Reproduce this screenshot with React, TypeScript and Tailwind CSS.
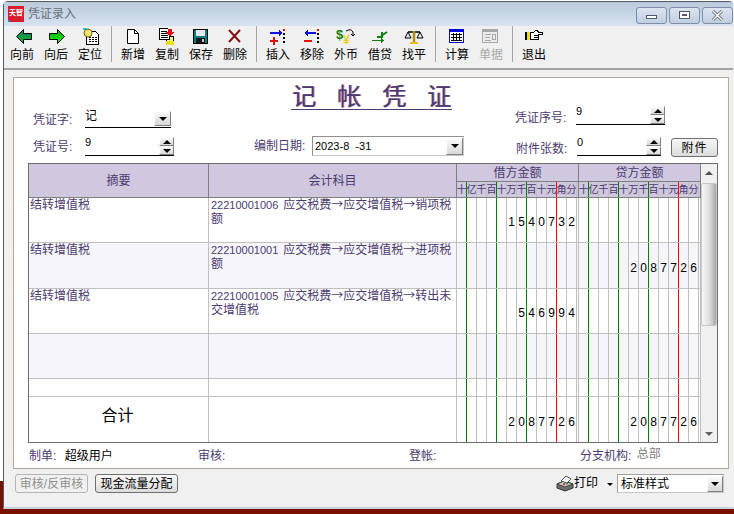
import type { ReactNode } from 'react';

const purple = 'text-[#4b3b70]';

function Arrow({ dir }: { dir: 'left' | 'right' }) {
  const id = `arrow-${dir}`;
  return (
    <svg width="20" height="18" viewBox="0 0 20 18">
      <defs>
        <linearGradient id={id} x1="0" y1="0" x2="0" y2="1">
          <stop offset="0" stopColor={dir === 'left' ? '#0d6f6f' : '#00a000'} />
          <stop offset="1" stopColor={dir === 'left' ? '#16c020' : '#20ff20'} />
        </linearGradient>
      </defs>
      {dir === 'left' ? (
        <polygon points="4.5,8.5 11.5,1.5 11.5,5.5 19.5,5.5 19.5,11.5 11.5,11.5 11.5,15.5" fill={`url(#${id})`} stroke="#000" />
      ) : (
        <polygon points="18.5,8.5 11.5,1.5 11.5,5.5 3.5,5.5 3.5,11.5 11.5,11.5 11.5,15.5" fill={`url(#${id})`} stroke="#000" />
      )}
    </svg>
  );
}

function LocateIcon() {
  return (
    <svg width="20" height="18" viewBox="0 0 20 18" shapeRendering="crispEdges">
      <path d="M6.5 3.5h9l3 3v10h-12z" fill="#fff" stroke="#000" />
      <path d="M9 9h2M12 9h2M15 9h2M9 11h2M12 11h2M15 11h2M9 13h2M12 13h2M15 13h2" stroke="#000" />
      <rect x="3" y="0" width="4" height="2" fill="#22c8e8" />
      <circle cx="8" cy="5" r="4" fill="#f2dc4a" stroke="#6b6b20" shapeRendering="auto" />
      <path d="M6 3l4 4M9 2l2 3" stroke="#fff8b0" />
    </svg>
  );
}

function NewIcon() {
  return (
    <svg width="20" height="18" viewBox="0 0 20 18">
      <path d="M4.5 1.5h7l4 4v10h-11z" fill="#fff" stroke="#000" />
      <path d="M11.5 1.5v4h4" fill="none" stroke="#000" />
    </svg>
  );
}

function CopyIcon() {
  return (
    <svg width="20" height="18" viewBox="0 0 20 18" shapeRendering="crispEdges">
      <path d="M9.5 8.5h7v8h-7z" fill="#f4f080" stroke="#000" />
      <rect x="9" y="13" width="8" height="4" fill="#e8e020" />
      <path d="M2.5 0.5h8l2 2v9h-10z" fill="#fff" stroke="#000" />
      <path d="M4 3h6M4 5h7M4 7h7M4 9h7" stroke="#000" />
      <path d="M11 1h4v3h2l-4 5-4-5h2z" fill="#e01010" />
    </svg>
  );
}

function SaveIcon() {
  return (
    <svg width="20" height="18" viewBox="0 0 20 18" shapeRendering="crispEdges">
      <path d="M2.5 1.5h14v14h-14z" fill="#0a7c80" stroke="#000" />
      <rect x="5" y="2" width="9" height="6" fill="#e8e8e8" />
      <rect x="5" y="10" width="9" height="5" fill="#10181c" />
      <rect x="11" y="11" width="2" height="3" fill="#bfc8c8" />
    </svg>
  );
}

function DeleteIcon() {
  return (
    <svg width="20" height="18" viewBox="0 0 20 18">
      <path d="M4 2l11 12M15 2L4 14" stroke="#8a1010" strokeWidth="2" fill="none" />
    </svg>
  );
}

function InsertIcon() {
  return (
    <svg width="20" height="18" viewBox="0 0 20 18" shapeRendering="crispEdges">
      <path d="M2 4h9V2l3 3-3 3V6H2z" fill="#1010e0" />
      <path d="M5 9h2v3h3v2H7v3H5v-3H2v-2h3z" fill="#e01010" />
      <rect x="15" y="1" width="2" height="2" fill="#e01010" />
      <path d="M15 5h2v2h-2zM15 9h2v2h-2zM15 13h2v2h-2z" fill="#000" />
    </svg>
  );
}

function RemoveIcon() {
  return (
    <svg width="20" height="18" viewBox="0 0 20 18" shapeRendering="crispEdges">
      <path d="M14 4H6V2L2 5l4 3V6h8z" fill="#1010e0" />
      <rect x="2" y="12" width="8" height="2" fill="#e01010" />
      <rect x="15" y="1" width="2" height="2" fill="#e01010" />
      <path d="M15 5h2v2h-2zM15 9h2v2h-2zM15 13h2v2h-2z" fill="#000" />
    </svg>
  );
}

function CurrencyIcon() {
  return (
    <svg width="20" height="18" viewBox="0 0 20 18">
      <text x="0" y="11" fontSize="13" fontWeight="700" fill="#108010" fontFamily="Liberation Sans">$</text>
      <text x="7" y="16" fontSize="12" fontWeight="700" fill="#e8d010" fontFamily="Liberation Sans">¥</text>
      <path d="M10 3q5-3 7 1l0 3" stroke="#000" fill="none" />
      <path d="M15 6l2 2 2-2" stroke="#000" fill="none" />
    </svg>
  );
}

function LoanIcon() {
  return (
    <svg width="20" height="18" viewBox="0 0 20 18" shapeRendering="crispEdges">
      <path d="M11 8l6-4" stroke="#108010" strokeWidth="2" shapeRendering="auto" />
      <path d="M12 4v5h-5" stroke="#108010" strokeWidth="1.5" fill="none" />
      <path d="M2 12h9V10l3 2.5-3 2.5v-2H2z" fill="#108010" />
    </svg>
  );
}

function BalanceIcon() {
  return (
    <svg width="20" height="18" viewBox="0 0 20 18">
      <path d="M4 4h12" stroke="#000" strokeWidth="1.5" />
      <path d="M10 3v11" stroke="#b09010" strokeWidth="2.5" />
      <path d="M6 15h8" stroke="#e0c010" strokeWidth="2" />
      <path d="M4 4L1 10h6zM16 4l-3 6h6z" fill="#e8e8e8" stroke="#000" />
    </svg>
  );
}

function CalcIcon() {
  return (
    <svg width="20" height="18" viewBox="0 0 20 18" shapeRendering="crispEdges">
      <rect x="2.5" y="1.5" width="14" height="13" fill="#fff" stroke="#0000e0" />
      <rect x="3" y="2" width="13" height="2" fill="#0000e0" />
      <path d="M4 6h11M4 9h11M4 12h11" stroke="#000" />
      <path d="M6.5 5v8M9.5 5v8M12.5 5v8" stroke="#000" />
    </svg>
  );
}

function VoucherIcon() {
  return (
    <svg width="20" height="18" viewBox="0 0 20 18" shapeRendering="crispEdges">
      <rect x="1.5" y="1.5" width="15" height="13" fill="#ececec" stroke="#a8a8a8" />
      <rect x="2" y="2" width="14" height="2" fill="#a8a8a8" />
      <path d="M4 6h6M4 9h5M4 12h6" stroke="#a8a8a8" />
      <rect x="11.5" y="6.5" width="3" height="5" fill="none" stroke="#a8a8a8" />
    </svg>
  );
}

function ExitIcon() {
  return (
    <svg width="20" height="18" viewBox="0 0 20 18" shapeRendering="crispEdges">
      <rect x="1" y="4" width="2" height="8" fill="#000" />
      <rect x="3" y="4" width="3" height="8" fill="#f0e020" />
      <path d="M6.5 4.500h3l2-2h2l1 2h4v2h-4v5h-8z" fill="#fff" stroke="#000" />
      <path d="M10 7h4M10 9h4" stroke="#000" />
    </svg>
  );
}

function PrinterIcon() {
  return (
    <svg width="18" height="17" viewBox="0 0 18 17">
      <path d="M1 9l7-3 9 3v4l-8 3-8-3z" fill="#6e6e6e" stroke="#303030" />
      <path d="M1 9l8 3 8-3-9-3z" fill="#c8c8c8" stroke="#404040" />
      <path d="M5 6l5-5 5 3-4 4z" fill="#f4f4f4" stroke="#505050" />
      <path d="M7 9.500l2-.5" stroke="#e02020" strokeWidth="1.500" />
      <path d="M10 9l2-.5" stroke="#20a040" strokeWidth="1.500" />
    </svg>
  );
}

type Tool = { label: string; icon: ReactNode; disabled?: boolean };

const toolGroups: Tool[][] = [
  [
    { label: '向前', icon: <Arrow dir="left" /> },
    { label: '向后', icon: <Arrow dir="right" /> },
    { label: '定位', icon: <LocateIcon /> },
  ],
  [
    { label: '新增', icon: <NewIcon /> },
    { label: '复制', icon: <CopyIcon /> },
    { label: '保存', icon: <SaveIcon /> },
    { label: '删除', icon: <DeleteIcon /> },
  ],
  [
    { label: '插入', icon: <InsertIcon /> },
    { label: '移除', icon: <RemoveIcon /> },
    { label: '外币', icon: <CurrencyIcon /> },
    { label: '借贷', icon: <LoanIcon /> },
    { label: '找平', icon: <BalanceIcon /> },
  ],
  [
    { label: '计算', icon: <CalcIcon /> },
    { label: '单据', icon: <VoucherIcon />, disabled: true },
  ],
  [{ label: '退出', icon: <ExitIcon /> }],
];

function Toolbar() {
  return (
    <div className="flex h-[42px] bg-[#f0f0f0] pl-px">
      {toolGroups.map((group, i) => (
        <div key={i} className="flex">
          {group.map((tool) => (
            <div key={tool.label} className="flex w-[34px] flex-col items-center pt-[2px]">
              <div className="h-[18px]">{tool.icon}</div>
              <div className={`mt-[3px] text-[12px] leading-[13px] ${tool.disabled ? 'text-[#a8a8a8]' : 'text-black'}`}>{tool.label}</div>
            </div>
          ))}
          {i < toolGroups.length - 1 && <div className="mx-[4px] h-[36px] w-px bg-[#a6a6a6]" />}
        </div>
      ))}
    </div>
  );
}

function Triangle({ up }: { up?: boolean }) {
  return (
    <div className={`h-0 w-0 border-x-[4px] border-x-transparent ${up ? 'border-b-[4px] border-b-black' : 'border-t-[4px] border-t-black'}`} />
  );
}

const bevel = 'border border-[#fdfdfd] border-r-[#808080] border-b-[#808080] bg-[linear-gradient(to_bottom,#fafafa,#d8d8d8)]';

function DropButton({ size }: { size: string }) {
  return (
    <div className={`flex items-center justify-center ${bevel} ${size}`}>
      <Triangle />
    </div>
  );
}

function Spinner() {
  return (
    <div className="flex w-[15px] flex-col">
      <div className={`flex h-[9px] items-center justify-center ${bevel}`}>
        <Triangle up />
      </div>
      <div className={`flex h-[9px] items-center justify-center ${bevel}`}>
        <Triangle />
      </div>
    </div>
  );
}

function SpinField({ value, width }: { value: string; width: string }) {
  return (
    <div className={`flex h-[19px] justify-between border-b border-black ${width}`}>
      <span className="text-[11px] leading-[11px] text-black">{value}</span>
      <Spinner />
    </div>
  );
}

function Label({ children, className }: { children: ReactNode; className: string }) {
  return <div className={`text-[12px] leading-[15px] ${purple} ${className}`}>{children}</div>;
}

function FormHead() {
  return (
    <div className="flex h-[85px]">
      <div className="w-[166px] pl-[19px] pt-[31px]">
        <div className="flex h-[19px] items-end">
          <Label className="w-[52px]">凭证字:</Label>
          <div className="flex h-[19px] w-[86px] justify-between border-b border-black pr-0">
            <span className="text-[12px] leading-[14px] text-black">记</span>
            <DropButton size="mt-[2px] h-[15px] w-[17px]" />
          </div>
        </div>
        <div className="mt-[9px] flex items-end">
          <Label className="mb-[1px] w-[52px]">凭证号:</Label>
          <SpinField value="9" width="w-[89px]" />
        </div>
      </div>

      <div className="w-[300px]">
        <div className="ml-[111px] mt-[6px] flex h-[26px] w-[161px] justify-between border-b border-[#4b3b70] pl-px pr-px pt-px text-[24px] leading-[24px] text-[#4b3b70] [text-shadow:1px_0_0_#b07090]">
          <span>记</span>
          <span>帐</span>
          <span>凭</span>
          <span>证</span>
        </div>
        <div className="ml-[74px] mt-[26px] flex items-center">
          <Label className="w-[58px]">编制日期:</Label>
          <div className="flex h-[20px] w-[152px] items-center justify-between border border-[#c8c8c8] border-t-[#909090] border-l-[#909090] bg-white pl-[2px]">
            <span className="text-[11px] text-black">2023-8&nbsp;&nbsp;-31</span>
            <DropButton size="h-[17px] w-[17px]" />
          </div>
        </div>
      </div>

      <div className="flex-1 pt-[28px]">
        <div className="flex items-end pl-[35px]">
          <Label className="mb-[-1px] w-[61px]">凭证序号:</Label>
          <SpinField value="9" width="w-[89px]" />
        </div>
        <div className="mt-[12px] flex items-end pl-[36px]">
          <Label className="mb-[-1px] w-[61px]">附件张数:</Label>
          <SpinField value="0" width="w-[84px]" />
          <div className="mb-[-1px] ml-[10px] flex h-[19px] w-[47px] items-center justify-center rounded-[3px] border border-[#707070] bg-[linear-gradient(to_bottom,#f6f6f6,#dcdcdc)] text-[12px] tracking-[1px] text-black">
            附件
          </div>
        </div>
      </div>
    </div>
  );
}

const digitLabels = ['十', '亿', '千', '百', '十', '万', '千', '百', '十', '元', '角', '分'];

const lineColors = [
  'border-[#008000]',
  'border-[#c0c0c0]',
  'border-[#c0c0c0]',
  'border-[#008000]',
  'border-[#c0c0c0]',
  'border-[#c0c0c0]',
  'border-[#008000]',
  'border-[#c0c0c0]',
  'border-[#c0c0c0]',
  'border-[#ff0000]',
  'border-[#c0c0c0]',
  'border-[#c0c0c0]',
];

function AmountCells({ amount }: { amount: string }) {
  const digits = amount.padStart(12, ' ').split('');
  return (
    <div className="flex border-r border-[#c0c0c0] pr-[1px]">
      {digits.map((d, i) => (
        <div key={i} className={`flex w-[10px] items-center justify-center border-r pt-[4px] text-[12px] text-black ${lineColors[i]}`}>
          {d.trim()}
        </div>
      ))}
    </div>
  );
}

function AmountHead({ title }: { title: string }) {
  return (
    <div className="flex flex-col border-r border-[#808080]">
      <div className={`flex h-[18px] items-center justify-center border-b border-[#808080] text-[12px] ${purple}`}>{title}</div>
      <div className="flex flex-1">
        {digitLabels.map((d, i) => (
          <div key={i} className={`flex w-[10px] items-center justify-center overflow-hidden whitespace-nowrap border-r text-[10px] ${purple} ${lineColors[i]}`}>
            {d}
          </div>
        ))}
      </div>
    </div>
  );
}

type Row = { height: string; bg: string; summary?: string; code?: string; account?: string; debit?: string; credit?: string };

const rows: Row[] = [
  { height: 'h-[45px]', bg: 'bg-white', summary: '结转增值税', code: '22210001006', account: '应交税费→应交增值税→销项税额', debit: '1540732' },
  { height: 'h-[46px]', bg: 'bg-[#f6f6fa]', summary: '结转增值税', code: '22210001001', account: '应交税费→应交增值税→进项税额', credit: '2087726' },
  { height: 'h-[45px]', bg: 'bg-white', summary: '结转增值税', code: '22210001005', account: '应交税费→应交增值税→转出未交增值税', debit: '546994' },
  { height: 'h-[45px]', bg: 'bg-[#f6f6fa]' },
  { height: 'h-[18px]', bg: 'bg-white' },
];

const columns = 'grid grid-cols-[180px_248px_122px_122px]';

function VoucherTable() {
  return (
    <div className="ml-[14px] flex h-[280px] w-[690px] border border-[#6e6e6e]">
      <div className="flex w-[672px] flex-col">
        <div className={`${columns} h-[34px] border-b border-[#808080] bg-[#cfc8df]`}>
          <div className={`flex items-center justify-center border-r border-[#808080] text-[12px] ${purple}`}>摘要</div>
          <div className={`flex items-center justify-center border-r border-[#808080] text-[12px] ${purple}`}>会计科目</div>
          <AmountHead title="借方金额" />
          <AmountHead title="贷方金额" />
        </div>

        {rows.map((row, i) => (
          <div key={i} className={`${columns} border-b border-[#c0c0c0] ${row.height} ${row.bg}`}>
            <div className={`border-r border-[#c0c0c0] pl-[1px] pt-[1px] text-[12px] leading-[13px] ${purple}`}>{row.summary}</div>
            <div className={`border-r border-[#c0c0c0] pl-[2px] text-[12px] leading-[13px] [font-family:'Noto_Sans_CJK_SC',sans-serif] ${purple}`}>
              <div className="-mt-px">
                {row.code && <span className="mr-[5px] text-[11px] leading-[11px] [font-family:'Liberation_Sans',sans-serif]">{row.code}</span>}
                {row.account}
              </div>
            </div>
            <AmountCells amount={row.debit ?? ''} />
            <AmountCells amount={row.credit ?? ''} />
          </div>
        ))}

        <div className={`${columns} h-[45px] bg-white`}>
          <div className="flex items-center justify-center border-r border-[#c0c0c0] pb-[8px] pr-[2px] text-[16px] text-black">合计</div>
          <div className="border-r border-[#c0c0c0]" />
          <AmountCells amount="2087726" />
          <AmountCells amount="2087726" />
        </div>
      </div>

      <div className="flex w-[16px] flex-col bg-[#f0f0f0]">
        <div className="flex h-[18px] items-center justify-center">
          <div className="h-0 w-0 border-x-[4px] border-b-[4px] border-x-transparent border-b-[#505050]" />
        </div>
        <div className="mt-px h-[143px] rounded-[2px] border border-[#c8c8c8] bg-[linear-gradient(to_right,#f8f8f8,#dcdcdc_55%,#a8a8a8)]" />
        <div className="flex-1" />
        <div className="flex h-[16px] items-center justify-center">
          <div className="h-0 w-0 border-x-[4px] border-t-[4px] border-x-transparent border-t-[#606060]" />
        </div>
      </div>
    </div>
  );
}

function SignRow() {
  return (
    <div className={`flex h-[25px] items-center pl-[15px] text-[12px] ${purple}`}>
      <div className="w-[169px]">
        制单: <span className="ml-[5px] text-black">超级用户</span>
      </div>
      <div className="w-[211px]">审核:</div>
      <div className="w-[171px]">登帐:</div>
      <div>
        分支机构: <span className="relative -top-[2px] ml-[2px] text-[#808080]">总部</span>
      </div>
    </div>
  );
}

function BottomBar() {
  return (
    <div className="flex flex-1 items-start bg-[#f0f0f0] pl-[11px] pt-[5px]">
      <div className="flex h-[19px] w-[73px] items-center justify-center rounded-[3px] border border-[#b4b4b4] text-[12px] text-[#909090]">审核/反审核</div>
      <div className="ml-[7px] flex h-[19px] w-[83px] items-center justify-center rounded-[3px] border border-[#707070] bg-[linear-gradient(to_bottom,#f8f8f8,#dcdcdc)] text-[12px] text-black">现金流量分配</div>
      <div className="ml-[378px] mt-[1px]">
        <PrinterIcon />
      </div>
      <div className="mt-[2px] text-[12px] leading-[15px] text-black">打印</div>
      <div className="ml-[9px] mt-[9px] h-0 w-0 border-x-[3px] border-t-[3px] border-x-transparent border-t-black" />
      <div className="ml-[4px] flex h-[19px] w-[107px] items-center justify-between border border-[#c8c8c8] border-t-[#a0a0a0] border-l-[#a0a0a0] bg-white pl-[3px] text-[12px] text-black">
        标准样式
        <DropButton size="h-[16px] w-[16px]" />
      </div>
    </div>
  );
}

function WindowButton({ children }: { children: ReactNode }) {
  return (
    <div className="flex h-[17px] w-[31px] items-center justify-center rounded-[3px] border border-[#7c8ea8] bg-[linear-gradient(to_bottom,#dbe5f0,#c0cfe0)]">
      {children}
    </div>
  );
}

function TitleBar() {
  return (
    <div className="flex h-[24px] items-center justify-between bg-[linear-gradient(to_bottom,#b9cbdc,#d8e3f1)] pl-[4px]">
      <div className="flex items-center">
        <div className="relative flex h-[16px] w-[16px] items-center justify-center overflow-hidden bg-[#d81c30] pb-[3px] text-[7px] font-bold leading-[8px] text-white">
          天智
          <div className="absolute bottom-0 left-0 h-[2px] w-[2px] bg-[#3080d0]" />
        </div>
        <div className="ml-[4px] text-[12px] text-[#666f7a]">凭证录入</div>
      </div>
      <div className="mt-[2px] flex gap-[2px]">
        <WindowButton>
          <div className="mt-[3px] h-[4px] w-[11px] border border-[#505a68] bg-white" />
        </WindowButton>
        <WindowButton>
          <div className="flex h-[8px] w-[11px] items-center justify-center border border-[#505a68] bg-white">
            <div className="h-[2px] w-[5px] border border-[#505a68]" />
          </div>
        </WindowButton>
        <WindowButton>
          <svg width="13" height="11" viewBox="0 0 13 11">
            <path d="M2 1l9 9M11 1l-9 9" stroke="#505a68" strokeWidth="3" />
            <path d="M2 1l9 9M11 1l-9 9" stroke="#fff" strokeWidth="1.500" />
          </svg>
        </WindowButton>
      </div>
    </div>
  );
}

export default function App() {
  return (
    <div className="h-[514px] w-[734px] overflow-hidden bg-[linear-gradient(to_bottom,#ffffff_481px,#7a0f00_481px)] [font-family:'Liberation_Sans','Noto_Sans_CJK_SC',sans-serif]">
      <div className="ml-[3px] mt-px flex h-[508px] flex-col rounded-tl-[5px] rounded-tr-[5px] border-x border-b-2 border-t border-[#55585c] border-b-[#c4d2e2] border-r-transparent bg-[#f0f0f0]">
        <TitleBar />
        <Toolbar />
        <div className="h-[2px] bg-[#a4a4a4]" />
        <div className="h-[7px]" />
        <div className="ml-[9px] mr-[4px] h-[392px] border border-[#b0a8a0] bg-white">
          <FormHead />
          <VoucherTable />
          <SignRow />
        </div>
        <BottomBar />
      </div>
    </div>
  );
}
